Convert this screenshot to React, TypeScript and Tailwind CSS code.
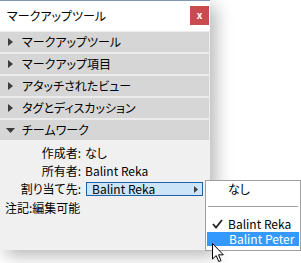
const font = { fontFamily: '"Noto Sans CJK JP", "Noto Sans", sans-serif', fontFeatureSettings: '"palt"' }

function Tri({ down }: { down?: boolean }) {
    return down ? (
        <svg width="9" height="5" viewBox="0 0 9 5" className="ml-[6px] mr-[7px]">
            <path d="M0 0 L9 0 L4.5 5 Z" fill="#3c3c3c" />
        </svg>
    ) : (
        <svg width="5" height="8" viewBox="0 0 5 8" className="ml-[8px] mr-[9px]">
            <path d="M0 0 L5 4 L0 8 Z" fill="#3c3c3c" />
        </svg>
    )
}

function Row({ label, open }: { label: string; open?: boolean }) {
    return (
        <div className="h-[20px] mb-[2px] bg-[#d6d6d6] flex items-center text-[12px] text-black leading-none">
            <Tri down={open} />
            <span>{label}</span>
        </div>
    )
}

export default function App() {
    const rows = ["マークアップツール", "マークアップ項目", "アタッチされたビュー", "タグとディスカッション"]

    return (
        <div className="relative w-[301px] h-[263px] bg-white overflow-hidden text-black" style={font}>
            {/* panel */}
            <div className="w-[210px] h-[250px] bg-[#f0f0f0] flex flex-col shadow-[6px_6px_16px_rgba(0,0,0,0.28)]">
                <div className="h-[31px] bg-white border-t border-[#7b97b5] flex items-center justify-between">
                    <span className="ml-[7px] text-[12px] leading-none">マークアップツール</span>
                    <div className="w-[19px] h-[19px] mr-[1px] mb-[2px] bg-[#c94b4f] flex items-center justify-center text-white text-[10px] font-bold leading-none">
                        x
                    </div>
                </div>
                <div className="h-[1px] bg-[#ececec]" />
                <div className="flex flex-col bg-[#ebebeb] pr-[1px]">
                    {rows.map((r) => (
                        <Row key={r} label={r} />
                    ))}
                    <div className="h-[20px] bg-[#d6d6d6] flex items-center text-[12px] leading-none">
                        <Tri down />
                        <span>チームワーク</span>
                    </div>
                </div>

                <div className="pt-[4px] text-[12px] leading-none">
                    <div className="grid grid-cols-[81px_1fr] gap-x-[4px] items-center">
                        <div className="h-[18px] flex items-center justify-end">作成者:</div>
                        <div className="h-[18px] flex items-center">なし</div>
                        <div className="h-[18px] flex items-center justify-end">所有者:</div>
                        <div className="h-[18px] flex items-center">Balint Reka</div>
                        <div className="h-[18px] flex items-center justify-end">割り当て先:</div>
                        <div className="h-[18px] flex items-center">
                            <div className="ml-[1px] w-[117px] h-[14px] bg-[#cce4f7] border border-[#1f61a8] flex items-center justify-between pl-[5px] pr-[4px]">
                                <span>Balint Reka</span>
                                <svg width="4" height="7" viewBox="0 0 4 7">
                                    <path d="M0 0 L4 3.5 L0 7 Z" fill="#404040" />
                                </svg>
                            </div>
                        </div>
                    </div>
                    <div className="h-[19px] flex items-center pl-[5px]">注記:編集可能</div>
                </div>
            </div>

            {/* context menu */}
            <div className="absolute left-[205px] top-[180px] w-[96px] h-[71px] bg-white border border-[#a0a0a0] text-[12px] leading-none flex flex-col px-[1px]">
                <div className="h-[15px] flex items-center pl-[21px]">なし</div>
                <div className="h-[20px] flex items-center px-[1px]">
                    <div className="w-full h-[1px] bg-[#a0a0a0]" />
                </div>
                <div className="h-[16px] flex items-center pl-[5px]">
                    <svg width="11" height="10" viewBox="0 0 11 10" className="mr-[5px]">
                        <path d="M1 5 L4 8.5 L10 1" fill="none" stroke="#222" strokeWidth="1.8" />
                    </svg>
                    <span>Balint Reka</span>
                </div>
                <div className="h-[14px] bg-[#3399ff] text-white flex items-center pl-[22px]">Balint Peter</div>
            </div>

            {/* cursor */}
            <svg width="13" height="20" viewBox="0 0 13 20" className="absolute left-[212px] top-[243px]">
                <path
                    d="M0.5 0.5 L0.5 16 L4.2 12.6 L6.8 18.6 L9 17.6 L6.5 11.8 L11.3 11.8 Z"
                    fill="#fff"
                    stroke="#000"
                    strokeWidth="1"
                    strokeLinejoin="round"
                />
            </svg>
        </div>
    )
}
